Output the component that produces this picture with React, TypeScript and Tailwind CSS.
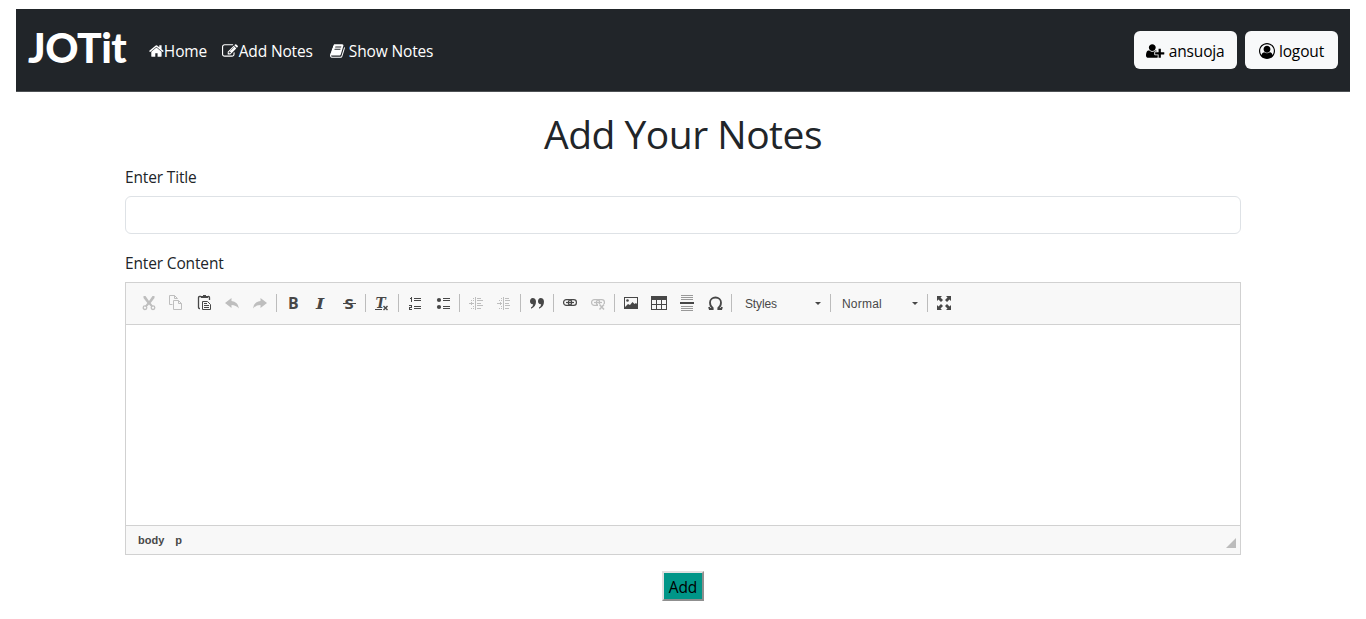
import React from 'react';

const dark = '#474747';
const light = '#bebebe';

function Fa({ box, w, d }: { box: string; w: number; d: string }) {
  return (
    <svg viewBox={box} width={w} height={16} fill="currentColor" className="shrink-0">
      <path d={d} />
    </svg>
  );
}

const homePath =
  'M1472 992v480q0 26-19 45t-45 19h-384v-384h-256v384h-384q-26 0-45-19t-19-45v-480q0-1 .5-3t.5-3l575-474 575 474q1 2 1 6zm223-69l-62 74q-8 9-21 11h-3q-13 0-21-7l-692-577-692 577q-12 8-24 7-13-2-21-11l-62-74q-8-10-7-23.5t11-21.5l719-599q32-26 76-26t76 26l244 204v-195q0-14 9-23t23-9h192q14 0 23 9t9 23v408l219 182q10 8 11 21.5t-7 23.5z';
const editPath =
  'M888 1184l116-116-152-152-116 116v56h96v96h56zm440-720q-16-16-33 1l-350 350q-17 17-1 33t33-1l350-350q17-17 1-33zm80 594v190q0 119-84.5 203.5t-203.5 84.5h-832q-119 0-203.5-84.5t-84.5-203.5v-832q0-119 84.5-203.5t203.5-84.5h832q63 0 117 25 15 7 18 23 3 17-9 29l-49 49q-14 14-32 8-23-6-45-6h-832q-66 0-113 47t-47 113v832q0 66 47 113t113 47h832q66 0 113-47t47-113v-126q0-13 9-22l64-64q15-15 35-7t20 29zm-96-738l288 288-672 672h-288v-288zm444 132l-92 92-288-288 92-92q28-28 68-28t68 28l152 152q28 28 28 68t-28 68z';
const bookPath =
  'M1703 478q40 57 18 129l-275 906q-19 64-76.5 107.5t-122.5 43.5h-923q-77 0-148.5-53.5t-99.5-131.5q-24-67-2-127 0-4 3-27t4-37q1-8-3-21.5t-3-19.5q2-11 8-21t16.5-23.5 16.5-23.5q23-38 45-91.5t30-91.5q3-10 .5-30t-.5-28q3-11 17-28t17-23q21-36 42-92t25-90q1-9-2.500-32t.5-28q4-13 22-30.5t22-22.5q19-26 42.5-84.5t27.5-96.5q1-8-3-25.5t-2-26.5q2-8 9-18t18-23 17-21q8-12 16.5-30.5t15-35 16-36 19.5-32 26.5-23.5 36-11.5 47.5 5.5l-1 3q38-9 51-9h761q74 0 114 56t18 130l-274 906q-36 119-71.5 153.5t-128.5 34.5h-869q-27 0-38 15-11 16-1 43 24 70 144 70h923q29 0 56-15.5t35-41.5l300-987q7-22 5-57 38 15 59 43zm-1064 2q-4 13 2 22.5t20 9.5h608q13 0 25.5-9.5t16.5-22.5l21-64q4-13-2-22.5t-20-9.5h-608q-13 0-25.5 9.5t-16.5 22.5zm-83 256q-4 13 2 22.5t20 9.5h608q13 0 25.5-9.5t16.5-22.5l21-64q4-13-2-22.5t-20-9.5h-608q-13 0-25.5 9.5t-16.5 22.5z';
const userPlusPath =
  'M704 896q-159 0-271.5-112.5t-112.5-271.5 112.5-271.5 271.5-112.5 271.5 112.5 112.5 271.5-112.5 271.5-271.5 112.5zm960 128h352q13 0 22.5 9.5t9.5 22.5v192q0 13-9.5 22.5t-22.5 9.5h-352v352q0 13-9.5 22.5t-22.5 9.5h-192q-13 0-22.5-9.5t-9.5-22.5v-352h-352q-13 0-22.5-9.5t-9.5-22.5v-192q0-13 9.5-22.5t22.5-9.5h352v-352q0-13 9.5-22.5t22.5-9.5h192q13 0 22.5 9.5t9.5 22.5v352zm-736 224q0 52 38 90t90 38h256v238q-68 50-171 50h-874q-121 0-194-69t-73-190q0-53 3.5-103.5t14-109 26.5-108.5 43-97.5 62-81 85.5-53.5 111.5-20q19 0 39 17 79 61 154.5 91.5t164.5 30.5 164.5-30.5 154.5-91.5q20-17 39-17 132 0 217 96h-223q-52 0-90 38t-38 90v192z';
const userCirclePath =
  'M896 0q182 0 348 71t286 191 191 286 71 348q0 181-70.5 347t-190.5 286-286 191.5-349 71.5-349-71-285.5-191.5-190.5-286-71-347.5 71-348 191-286 286-191 348-71zm619 1351q149-205 149-455 0-156-61-298t-164-245-245-164-298-61-298 61-245 164-164 245-61 298q0 250 149 455 66-327 306-327 131 128 313 128t313-128q240 0 306 327zm-235-647q0-159-112.5-271.5t-271.5-112.5-271.5 112.5-112.5 271.5 112.5 271.5 271.5 112.5 271.5-112.5 112.5-271.5z';

function Tool({ label, off, children }: { label: string; off?: boolean; children: React.ReactNode }) {
  const c = off ? light : dark;
  return (
    <button type="button" aria-label={label} className="p-1.5">
      <svg width={16} height={16} viewBox="0 0 16 16" color={c} fill="currentColor" className="block overflow-visible">
        {children}
      </svg>
    </button>
  );
}

const Sep = ({ first }: { first?: boolean }) => (
  <span className={`mt-[5px] mr-0.5 h-[18px] w-px bg-[#bcbcbc] ${first ? 'ml-px' : 'ml-0.5'}`} />
);

function Combo({ label, className }: { label: string; className: string }) {
  return (
    <button type="button" className={`flex h-[29px] items-center justify-between font-['Liberation_Sans',sans-serif] text-[12px] text-[#484848] ${className}`}>
      <span>{label}</span>
      <svg width={6} height={3} viewBox="0 0 6 3" fill={dark}>
        <path d="M0 0h6L3 3z" />
      </svg>
    </button>
  );
}

const linkRings = (
  <g fill="none" stroke="currentColor" strokeWidth="1.2">
    <rect x="1.6" y="4.600" width="8" height="5.800" rx="2.700" />
    <rect x="6.400" y="4.600" width="8" height="5.800" rx="2.700" />
    <path d="M4 7.500h8" />
  </g>
);

function Toolbar() {
  return (
    <div className="flex h-[42px] items-start border-b border-[#d1d1d1] bg-[#f8f8f8] pt-1.5 pl-[9px]">
      <Tool label="Cut" off>
        <path d="M2.5 1h2L8 6l3.500-5h2v2L9.700 8l2.300 3-1.500 1L8 9.500 5.500 12 4 11l2.300-3L2.500 3z" />
        <g fill="none" stroke="currentColor" strokeWidth="1.300">
          <circle cx="4" cy="12.700" r="1.800" />
          <circle cx="12" cy="12.700" r="1.800" />
        </g>
      </Tool>
      <Tool label="Copy" off>
        <path d="M3.500 9.500h-3v-9h5l3 3M5.500.5v3h3M4.500 5.500h5l3 3v6h-8zM9.500 5.500v3h3" fill="none" stroke="currentColor" />
      </Tool>
      <Tool label="Paste">
        <path d="M4 1.500H2.500q-1 0-1 1v10q0 1 1 1H3M11 1.500h.5q1 0 1 1V5" fill="none" stroke="currentColor" strokeWidth="1.300" />
        <path d="M4 1h2V0h3v1h2v2H4z" />
        <path d="M5.500 6.500h5l3 3v5h-8z" fill="none" stroke="currentColor" />
        <path d="M7 8h3v1H7zM7 10h5v1H7zM7 12h5v1H7z" />
      </Tool>
      <Tool label="Undo" off>
        <path d="M0 8l6.500-5v3Q13 6.500 14 13.500 11 10 6.500 10v3z" />
      </Tool>
      <Tool label="Redo" off>
        <path d="M14 8L7.500 3v3Q1 6.500 0 13.500 3 10 7.500 10v3z" />
      </Tool>
      <Sep first />
      <Tool label="Bold">
        <text x="3.100" y="14" fontFamily="Open Sans" fontWeight="700" fontSize="15.500" textLength="10.500" lengthAdjust="spacingAndGlyphs">B</text>
      </Tool>
      <Tool label="Italic">
        <text x="3" y="14" fontFamily="DejaVu Serif" fontStyle="italic" fontWeight="700" fontSize="15" textLength="8" lengthAdjust="spacingAndGlyphs">I</text>
      </Tool>
      <Tool label="Strike Through">
        <text x="3.600" y="14" fontFamily="Open Sans" fontWeight="700" fontSize="15" textLength="9" lengthAdjust="spacingAndGlyphs">S</text>
        <path d="M2 8h13v1H2z" />
      </Tool>
      <Sep />
      <Tool label="Remove Format">
        <text x="1.500" y="12.500" fontFamily="DejaVu Serif" fontStyle="italic" fontWeight="700" fontSize="14" textLength="10" lengthAdjust="spacingAndGlyphs">T</text>
        <path d="M1 14h7v1H1z" />
        <path d="M9.500 11l4 4M13.500 11l-4 4" stroke="currentColor" strokeWidth="1.400" />
      </Tool>
      <Sep />
      <Tool label="Numbered List">
        <path d="M3 3h1V2h1v5H4V4H3zM2 10h3v3H3v1h2v1H2v-3h2v-1H2zM7 3h7v1H7zM7 5h7v1H7zM7 11h7v1H7zM7 13h7v1H7z" />
      </Tool>
      <Tool label="Bulleted List">
        <circle cx="4" cy="5" r="2.100" />
        <circle cx="4" cy="12" r="2.100" />
        <path d="M8 3h7v1H8zM8 5h7v1H8zM8 11h7v1H8zM8 13h7v1H8z" />
      </Tool>
      <Sep />
      <Tool label="Decrease Indent" off>
        <path d="M7 2h1v13H7zM9 3h4v1H9zM9 5h6v1H9zM9 8h4v1H9zM9 10h6v1H9zM9 13h4v1H9zM2 8h4v1H2zM3 7h1v3H3zM1 8h1v1H1zM5 3h1v1H5zM3 5h1v1H3zM5 5h1v1H5zM5 11h1v1H5zM3 13h1v1H3zM5 13h1v1H5z" />
      </Tool>
      <Tool label="Increase Indent" off>
        <path d="M7 2h1v13H7zM9 3h4v1H9zM9 5h5v1H9zM9 8h4v1H9zM9 10h5v1H9zM9 13h4v1H9zM1 8h5v1H1zM4 7h1v3H4zM5 3h1v1H5zM3 5h1v1H3zM5 5h1v1H5zM5 11h1v1H5zM3 13h1v1H3zM5 13h1v1H5z" />
      </Tool>
      <Sep />
      <Tool label="Block Quote">
        <path d="M3.500 3C5.800 3 7 4.500 7 6.800 7 10 5.300 12.500 2 13.700V12.500Q4 11.500 4.200 9.300C2 9.600 1 8 1 6.300 1 4.500 2.200 3 3.500 3zM11.500 3C13.800 3 15 4.500 15 6.800 15 10 13.300 12.500 10 13.700V12.500q2-1 2.200-3.200C10 9.600 9 8 9 6.300 9 4.500 10.200 3 11.500 3z" />
      </Tool>
      <Sep />
      <Tool label="Link">{linkRings}</Tool>
      <Tool label="Unlink" off>
        {linkRings}
        <path d="M8 9h8v6H8z" fill="#f8f8f8" />
        <path d="M9.500 9.500l4.500 5M14 9.500l-4.500 5" stroke="currentColor" strokeWidth="1.500" />
      </Tool>
      <Sep />
      <Tool label="Image">
        <path fillRule="evenodd" d="M1 2h14v12H1zM2 3v9l3-3 2 1 2.500-3 2 2L13 8l1 1V3z" />
        <circle cx="4.500" cy="5.500" r="1.300" />
      </Tool>
      <Tool label="Table">
        <path fillRule="evenodd" d="M0 1h16v14H0zM1 5v4h4V5zM6 5v4h4V5zM11 5v4h4V5zM1 10v4h4v-4zM6 10v4h4v-4zM11 10v4h4v-4z" />
      </Tool>
      <Tool label="Horizontal Line">
        <path d="M2 0h12v1H2zM2 2h12v1H2zM2 4h12v1H2zM2 11h12v1H2zM2 13h12v1H2zM2 15h12v1H2z" fill="#999" />
        <path d="M1 7h14v2H1z" />
      </Tool>
      <Tool label="Special Character">
        <path d="M2 12l.7 2h3v-1C3.500 11.500 3 9.500 3 7.500 3 4.500 5.500 2.500 8.500 2.500S14 4.500 14 7.500c0 2-.5 4-2.700 5.500v1h3l.7-2" fill="none" stroke="currentColor" strokeWidth="1.800" />
      </Tool>
      <Sep />
      <Combo label="Styles" className="w-[94px] pr-[7px] pl-[11px]" />
      <Sep />
      <Combo label="Normal" className="w-[92px] pr-[7px] pl-[9px] tracking-[0.2px]" />
      <Sep />
      <Tool label="Maximize">
        <path d="M1 1h5L4.500 2.500 7 5 5 7 2.500 4.500 1 6zM15 1v5l-1.500-1.500L11 7 9 5l2.500-2.500L10 1zM1 15v-5l1.500 1.500L5 9l2 2-2.500 2.500L6 15zM15 15h-5l1.500-1.500L9 11l2-2 2.500 2.500L15 10z" />
      </Tool>
    </div>
  );
}

export default function App() {
  return (
    <div className="h-[619px] overflow-hidden bg-white px-4 pt-[9px] font-['Open_Sans','Noto_Sans',sans-serif] text-[15.5px] leading-6 tracking-[-0.15px] text-[#212529]">
      <nav className="flex h-[83px] items-center border-b border-[#4d5154] bg-[#212529] px-3 pt-0.5 text-white">
        <span className="w-[121px] pb-1.5 font-['Lato','Open_Sans',sans-serif] text-[41px] leading-[60px] font-black tracking-[-0.5px]">JOTit</span>
        <a className="flex w-[73px] items-center whitespace-nowrap"><Fa box="64 0 1664 1792" w={14.86} d={homePath} />Home</a>
        <a className="flex w-[108px] items-center gap-[0.7px] whitespace-nowrap"><Fa box="0 0 1792 1792" w={16} d={editPath} />Add Notes</a>
        <a className="flex items-center gap-1 whitespace-nowrap"><Fa box="64 0 1664 1792" w={14.86} d={bookPath} />Show Notes</a>
        <div className="ml-auto flex gap-2 pb-0.5 text-black">
          <button type="button" className="flex h-[38px] w-[103px] items-center justify-center gap-1 rounded-md bg-[#f8f9fa] pt-0.5">
            <Fa box="0 0 2048 1792" w={18.29} d={userPlusPath} />ansuoja
          </button>
          <button type="button" className="flex h-[38px] w-[93px] items-center justify-center gap-1 rounded-md bg-[#f8f9fa] pt-0.5">
            <Fa box="0 0 1792 1792" w={16} d={userCirclePath} />logout
          </button>
        </div>
      </nav>
      <main className="mx-auto flex w-[1116px] flex-col pt-[18px]">
        <h1 className="h-[55px] text-center text-[39px] leading-12 tracking-[-0.5px]">Add Your Notes</h1>
        <label className="block h-[31px]">Enter Title</label>
        <input className="h-[38px] rounded-md border border-[#dee2e6]" aria-label="Enter Title" />
        <label className="mt-[17px] block h-[31px]">Enter Content</label>
        <section className="h-[273px] border border-[#d1d1d1]">
          <Toolbar />
          <div className="h-[200px] bg-white" />
          <footer className="flex h-[29px] justify-between border-t border-[#d1d1d1] bg-[#f8f8f8] pr-1 pl-3 font-['Liberation_Sans',sans-serif] text-[11px] leading-[28px] font-bold tracking-normal text-[#484848]">
            <div className="flex gap-[11px]"><span>body</span><span>p</span></div>
            <svg width={10} height={10} viewBox="0 0 10 10" fill="#bcbcbc" className="mt-3">
              <path d="M10 0v10H0z" />
            </svg>
          </footer>
        </section>
        <button type="button" className="mx-auto mt-4 h-[30px] w-[42px] border-2 border-t-[#e0e0e0] border-r-[#8f8f8f] border-b-[#8f8f8f] border-l-[#e0e0e0] bg-[#009688] pt-0.5 text-black">Add</button>
      </main>
    </div>
  );
}
